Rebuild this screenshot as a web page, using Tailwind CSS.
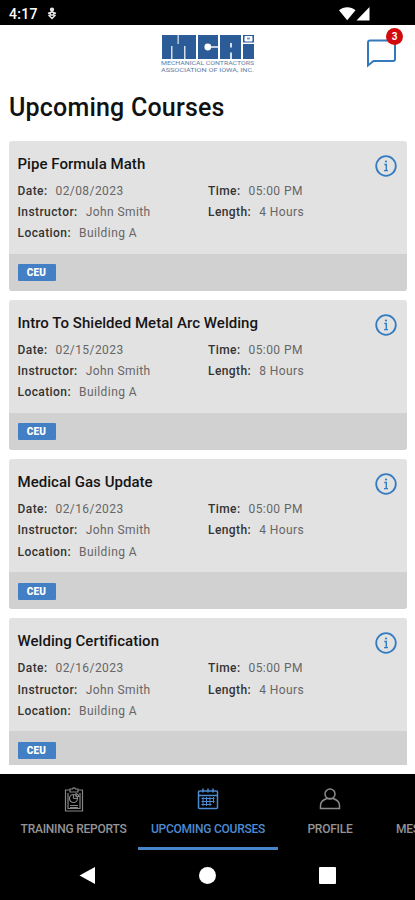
<!DOCTYPE html>
<html lang="en">
<head>
<meta charset="utf-8">
<title>Upcoming Courses</title>
<script src="https://cdn.jsdelivr.net/npm/@tailwindcss/browser@4"></script>
</head>
<body class="bg-white">
<div class="w-[415px] h-[900px] flex flex-col overflow-hidden bg-white font-['Roboto',sans-serif] text-black">
  <div class="h-[25px] shrink-0 bg-black flex items-center pl-[9px] pr-[44px] pt-[2px] text-white">
    <span class="text-[14px] font-medium leading-none w-[29px] whitespace-nowrap tracking-[0.3px]">4:17</span>
    <svg class="ml-[9px]" width="10" height="13" viewBox="0 0 10 13" fill="none" stroke="#e5e5e5" stroke-width="1.500"><circle cx="5" cy="2.600" r="1.400" fill="#e5e5e5"/><path d="M5 3v3M1 6.500 4 5.200h2L9 6.500M1.500 8 5 11.500 8.500 8M3.300 6v2h3.400V6"/></svg>
    <svg class="ml-auto" width="32" height="15" viewBox="0 0 32 15" fill="#fff"><path d="M0 4.300C4.600.2 12 .2 16.500 4.300L8.200 14.300ZM30.500 1v13.500H17.500Z"/></svg>
  </div>
  <header class="h-[62px] shrink-0 relative flex justify-center pt-[9px]">
    <svg width="96" height="40" viewBox="0 0 96 40">
      <g fill="#2c5c97">
        <rect x="2" y="1" width="34" height="24"/>
        <rect x="38" y="1" width="20" height="24"/>
        <rect x="60" y="1" width="21" height="24"/>
        <rect x="83" y="10" width="11" height="15"/>
        <rect x="83" y="1" width="11" height="7.500"/>
      </g>
      <g font-family="Roboto, sans-serif" font-size="17" font-weight="900" fill="#2c5c97">
        <text x="10" y="19">M</text>
        <text x="42" y="19">C</text>
        <text x="65" y="19">A</text>
      </g>
      <g fill="#d5dfec">
        <rect x="11" y="12" width="1.500" height="13"/>
        <rect x="24" y="12" width="1.500" height="13"/>
        <rect x="17.500" y="1" width="1.300" height="9"/>
        <rect x="70" y="9" width="2" height="4.500"/>
        <rect x="70" y="18.500" width="2" height="6.500"/>
      </g>
      <rect x="84.500" y="2" width="8" height="5.500" rx="1" fill="#fff"/>
      <rect x="87" y="3.500" width="3" height="2" fill="#7f9dc2"/>
      <circle cx="47.800" cy="13" r="3.400" fill="#fff"/><path d="M50 13h8.500" stroke="#fff" stroke-width="1.400"/>
      <g font-family="Roboto, sans-serif" font-size="5.500" fill="#5d7ea9">
        <text x="1" y="31" textLength="93" lengthAdjust="spacingAndGlyphs">MECHANICAL CONTRACTORS</text>
        <text x="1" y="37.700" textLength="93" lengthAdjust="spacingAndGlyphs">ASSOCIATION OF IOWA, INC.</text>
      </g>
    </svg>
    <svg class="absolute left-[366px] top-[13px]" width="31" height="30" viewBox="0 0 31 30" fill="none" stroke="#3478be" stroke-width="2"><path d="M2 26V4.500Q2 2.500 4 2.500H27Q29 2.500 29 4.500V21Q29 23 27 23H7.500L2 27.500Z"/></svg>
    <span class="absolute left-[386px] top-[3px] w-[17px] h-[17px] rounded-full bg-[#d20a0d] text-white text-[10px] font-bold flex items-center justify-center">3</span>
  </header>
  <h1 class="h-[53px] shrink-0 pl-[9px] pt-[5px] text-[25px] leading-[32px] font-medium tracking-[0.2px] text-[#111]">Upcoming Courses</h1>
  <main id="courses" class="h-[625px] shrink-0 flex flex-col gap-[9px] overflow-hidden pl-[9px] pr-[8px] pt-[0.500px]"></main>
  <div class="h-[9px] shrink-0 bg-white"></div>
  <nav class="h-[77px] shrink-0 bg-black relative flex text-[12px] leading-[14px] font-medium tracking-[-0.240px] text-[#949494] whitespace-nowrap overflow-hidden">
    <div class="w-[138px] pl-[9px] shrink-0 flex flex-col items-center pt-[12px]">
      <svg width="20" height="27" viewBox="0 0 20 27" fill="none" stroke="#858585" stroke-width="1.200"><path d="M6 4H1.500v21h17V4H14M6 6V3h2.500a1.600 1.600 0 0 1 3 0H14v3ZM4 7v15.500h12V7M6 19.500h8M6 21.500h8"/><circle cx="9.500" cy="12.500" r="4"/><path d="M9.500 12.500V8.500M9.500 12.500h4M12 7.500a4 4 0 0 1 3 3h-3Z"/></svg>
      <span class="mt-[9px]">TRAINING REPORTS</span>
    </div>
    <div class="w-[140px] shrink-0 flex flex-col items-center pt-[12px] text-[#4c8bd0] border-b-3 border-[#4885c8] mb-[1px]">
      <svg width="22" height="27" viewBox="0 0 22 27" fill="none" stroke="#4c8bd0" stroke-width="1.500"><rect x="1.500" y="5" width="19" height="17.500" rx="1"/><path d="M1.500 9.500h19M6 2.500v4M16 2.500v4M11 2.500v4"/><path d="M4.500 12.500h13M4.500 15.500h13M4.500 18.500h10M6 11v9M9.500 11v9M13 11v9M16.500 11v6" stroke-width="1"/></svg>
      <span class="mt-[9px]">UPCOMING COURSES</span>
    </div>
    <div class="w-[104px] shrink-0 flex flex-col items-center pt-[12px]">
      <svg width="22" height="27" viewBox="0 0 22 27" fill="none" stroke="#8b8b8b" stroke-width="1.500"><circle cx="11" cy="8" r="5"/><path d="M1.500 22.500v-3C1.500 15.500 5 13.500 8 12.500h6c3 1 6.500 3 6.500 7v3Z"/></svg>
      <span class="mt-[9px]">PROFILE</span>
    </div>
    <div class="shrink-0 pl-[14px] pt-[48px]">MESSAGES</div>
  </nav>
  <div class="h-[49px] shrink-0 bg-black flex items-start pl-[79px] pt-[15px]">
    <svg width="17" height="19" viewBox="0 0 17 19" fill="#fff"><path d="M.5 9.500 16 1v17Z"/></svg>
    <span class="ml-[103px] mt-[1px] w-[17px] h-[17px] rounded-full bg-white"></span>
    <span class="ml-[103px] mt-[1px] w-[17px] h-[17px] rounded-[1px] bg-white"></span>
  </div>
</div>
<script>
const courses = [
  ["Pipe Formula Math", "02/08/2023", "4 Hours"],
  ["Intro To Shielded Metal Arc Welding", "02/15/2023", "8 Hours"],
  ["Medical Gas Update", "02/16/2023", "4 Hours"],
  ["Welding Certification", "02/16/2023", "4 Hours"]
];
const field = (label, value) => `<div class="flex gap-[8px]"><span class="font-medium text-[#333]">${label}:</span><span class="text-[#666]">${value}</span></div>`;
document.getElementById("courses").innerHTML = courses.map(([title, date, length]) => `
  <article class="h-[150.250px] shrink-0 rounded-[3px] overflow-hidden bg-[#e2e2e2] flex flex-col">
    <div class="h-[113px] relative pl-[8.500px] pt-[13px]">
      <h2 class="text-[15px] leading-[20px] font-medium tracking-[0.040px] text-[#151515]">${title}</h2>
      <div class="mt-[7px] flex text-[12px] leading-[21.250px] tracking-[0.420px]">
        <div class="w-[190.500px]">${field("Date", date)}${field("Instructor", "John Smith")}${field("Location", "Building A")}</div>
        <div>${field("Time", "05:00 PM")}${field("Length", length)}</div>
      </div>
      <svg class="absolute right-[10px] top-[14px]" width="22" height="22" viewBox="0 0 22 22" fill="none" stroke="#347cc1" stroke-width="1.800"><circle cx="11" cy="11" r="9.800"/><path d="M9.300 9.500h2v6M9 15.600h4" stroke-width="1.400"/><circle cx="11" cy="6.500" r="1.100" fill="#347cc1" stroke="none"/></svg>
    </div>
    <div class="flex-1 bg-[#d1d1d1] pl-[8.500px] pt-[10.500px]"><div class="w-[38px] h-[17px] rounded-[1px] bg-[#437fc4] text-white text-[10px] leading-[17px] font-black text-center tracking-[0.200px]">CEU</div></div>
  </article>`).join("");
</script>
</body>
</html>
